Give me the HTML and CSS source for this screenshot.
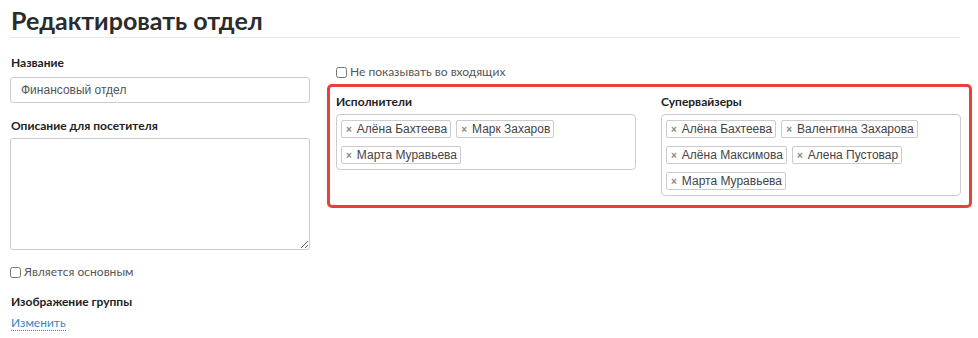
FILE: index.html
```html
<!DOCTYPE html>
<html lang="ru">
<head>
    <meta charset="UTF-8">
    <title>Редактировать отдел</title>
    <link rel="stylesheet" href="styles.css">
</head>
<body>

<div class="page">
    <h1 class="title">Редактировать отдел</h1>

    <div class="form">
        <!-- левая колонка -->
        <div class="col-left">
            <label class="field-label">Название</label>
            <input class="text-input" type="text" placeholder="Финансовый отдел">

            <label class="field-label short">Описание для посетителя</label>
            <textarea class="text-area"></textarea>

            <label class="check"><input type="checkbox"> Является основным</label>

            <div class="field-label">Изображение группы</div>
            <a class="link" href="#">Изменить</a>
        </div>

        <!-- правая колонка -->
        <div class="col-right">
            <label class="check"><input type="checkbox"> Не показывать во входящих</label>

            <div class="highlight">
                <div class="people">
                    <div class="field-label">Исполнители</div>
                    <div class="tags">
                        <span class="tag"><span class="x">×</span>Алёна Бахтеева</span>
                        <span class="tag"><span class="x">×</span>Марк Захаров</span>
                        <span class="tag"><span class="x">×</span>Марта Муравьева</span>
                    </div>
                </div>
                <div class="people">
                    <div class="field-label">Супервайзеры</div>
                    <div class="tags">
                        <span class="tag"><span class="x">×</span>Алёна Бахтеева</span>
                        <span class="tag"><span class="x">×</span>Валентина Захарова</span>
                        <span class="tag"><span class="x">×</span>Алёна Максимова</span>
                        <span class="tag"><span class="x">×</span>Алена Пустовар</span>
                        <span class="tag"><span class="x">×</span>Марта Муравьева</span>
                    </div>
                </div>
            </div>
        </div>
    </div>
</div>

</body>
</html>
```

FILE: styles.css
```css
body {
    margin: 0;
    background: #fff;
    color: #333;
    font-family: "Liberation Sans", Arial, sans-serif;
    font-size: 12px;
}
.page {
    padding: 5px 18px 0 10px;
}
.title {
    font-family: Lato, "Open Sans", sans-serif;
    font-size: 25px;
    font-weight: 700;
    color: #2b2b2b;
    margin: 0;
    padding: 0 0 2px 1px;
    line-height: 30px;
    border-bottom: 1px solid #e8e8e8;
}
.form {
    display: flex;
    gap: 17px;
    margin-top: 17px;
}
.col-left {
    width: 300px;
    display: flex;
    flex-direction: column;
}
.field-label {
    font-family: Lato, sans-serif;
    font-weight: 700;
    font-size: 12px;
    color: #222;
    display: block;
    line-height: 16px;
    margin: 0 0 6px 1px;
}
.field-label.short {
    margin-bottom: 4px;
}
.text-input {
    box-sizing: border-box;
    width: 300px;
    height: 26px;
    border: 1px solid #ccc;
    border-radius: 3px;
    padding: 0 10px;
    font-family: "Liberation Sans", Arial, sans-serif;
    font-size: 12px;
    margin: 0 0 15px;
}
.text-input::placeholder {
    color: #555;
}
.text-area {
    box-sizing: border-box;
    width: 300px;
    height: 112px;
    border: 1px solid #ccc;
    border-radius: 3px;
    margin: 0 0 14px;
    resize: vertical;
}
.check {
    display: flex;
    align-items: center;
    gap: 3px;
    font-family: Lato, sans-serif;
    font-size: 12px;
    color: #555;
    line-height: 16px;
}
.check input {
    margin: 0;
    width: 11px;
    height: 11px;
}
.col-left .check {
    margin-bottom: 14px;
}
.link {
    font-family: Lato, sans-serif;
    font-size: 12px;
    color: #3a87c8;
    text-decoration: none;
    border-bottom: 1px dotted #3a87c8;
    align-self: flex-start;
    line-height: 14px;
    margin-left: 1px;
}
.col-right {
    flex: 1;
    padding-top: 9px;
}
.col-right .check {
    margin: 0 0 4px 9px;
}
.highlight {
    border: 3px solid #e8403a;
    border-radius: 5px;
    padding: 7px 8px 9px 6px;
    display: flex;
    gap: 25px;
}
.people {
    width: 300px;
}
.people .field-label {
    margin: 0 0 4px 0;
}
.tags {
    border: 1px solid #ccc;
    border-radius: 4px;
    padding: 5px 5px 5px 4px;
    display: flex;
    flex-wrap: wrap;
    gap: 8px 5px;
}
.tag {
    display: inline-flex;
    align-items: center;
    height: 18px;
    box-sizing: border-box;
    border: 1px solid #ccc;
    border-radius: 2px;
    padding: 0 3px 0 4px;
    font-size: 12px;
    color: #444;
}
.x {
    color: #888;
    font-weight: 700;
    font-size: 10px;
    margin-right: 5px;
}
```
